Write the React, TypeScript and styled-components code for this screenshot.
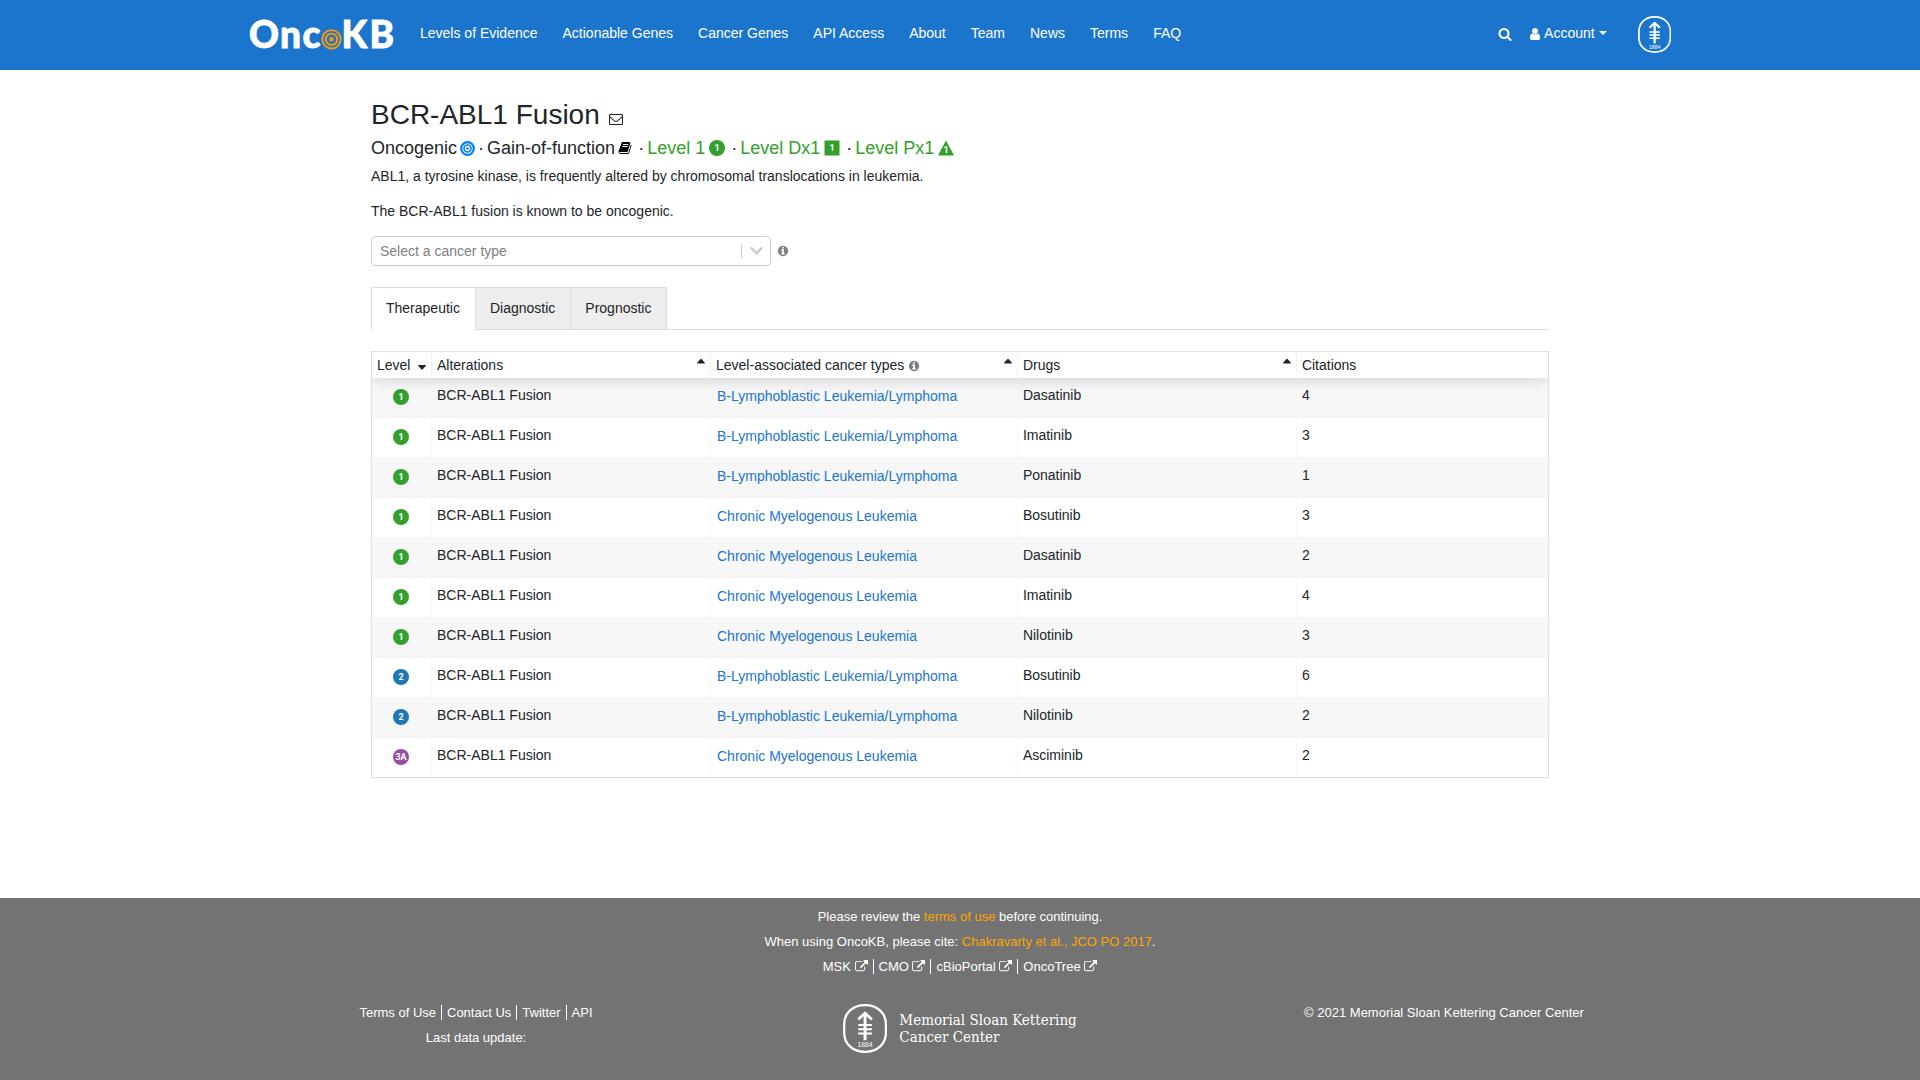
import React from 'react';
import styled, { createGlobalStyle } from 'styled-components';

const color = {
  brand: '#1c75cd',
  text: '#212529',
  orange: '#ffa500',
  footer: '#737373',
  line: '#dddddd',
  level1: '#33a02c',
  level2: '#1f78b4',
  level3: '#984ea3',
};

const GlobalStyle = createGlobalStyle`
  *, *::before, *::after { box-sizing: border-box; }
  body {
    margin: 0;
    background: #fff;
    color: ${color.text};
    font: 14px/21px "Liberation Sans", Arial, sans-serif;
  }
  h1, h2, p { margin: 0; font-weight: 400; }
  a { text-decoration: none; }
  button { font: inherit; color: inherit; background: none; border: 0; padding: 0; cursor: pointer; }
`;

/* ---------- icons ---------- */

const ICONS = {
  search: {
    box: '0 0 1792 1792',
    d: 'M1216 832q0-185-131.5-316.5t-316.5-131.5-316.5 131.5-131.5 316.5 131.5 316.5 316.5 131.5 316.5-131.5 131.5-316.5zm512 832q0 52-38 90t-90 38q-54 0-90-38l-343-342q-179 124-399 124-143 0-273.5-55.5t-225-150-150-225-55.5-273.5 55.5-273.5 150-225 225-150 273.5-55.5 273.5 55.5 225 150 150 225 55.5 273.5q0 220-124 399l343 343q37 37 37 90z',
  },
  user: {
    box: '256 0 1280 1792',
    d: 'M1536 1399q0 109-62.5 187t-150.5 78h-854q-88 0-150.5-78t-62.5-187q0-85 8.5-160.5t31.5-152 58.5-131 94-89 134.5-34.5q131 128 313 128t313-128q76 0 134.5 34.5t94 89 58.5 131 31.5 152 8.5 160.5zm-256-887q0 159-112.5 271.5t-271.5 112.5-271.5-112.5-112.5-271.5 112.5-271.5 271.5-112.5 271.5 112.5 112.5 271.5z',
  },
  info: {
    box: '0 0 1792 1792',
    d: 'M1152 1376v-160q0-14-9-23t-23-9h-96v-512q0-14-9-23t-23-9h-320q-14 0-23 9t-9 23v160q0 14 9 23t23 9h96v320h-96q-14 0-23 9t-9 23v160q0 14 9 23t23 9h448q14 0 23-9t9-23zm-128-896v-160q0-14-9-23t-23-9h-192q-14 0-23 9t-9 23v160q0 14 9 23t23 9h192q14 0 23-9t9-23zm640 416q0 209-103 385.5t-279.5 279.5-385.5 103-385.5-103-279.5-279.5-103-385.5 103-385.5 279.5-279.5 385.5-103 385.5 103 279.5 279.5 103 385.5z',
  },
  envelope: {
    box: '0 0 1792 1792',
    d: 'M1664 1504v-768q-32 36-69 66-268 206-426 338-51 43-83 67t-86.5 48.5-102.5 24.5h-2q-48 0-102.5-24.5t-86.5-48.5-83-67q-158-132-426-338-37-30-69-66v768q0 13 9.5 22.5t22.5 9.5h1472q13 0 22.5-9.5t9.5-22.5zm0-1051v-24.5l-.5-13-3-12.5-5.5-9-9-7.5-14-2.5h-1472q-13 0-22.5 9.5t-9.5 22.5q0 168 147 284 193 152 401 317 6 5 35 29.5t46 37.5 44.5 31.5 50.5 27.5 43 9h2q20 0 43-9t50.5-27.5 44.5-31.5 46-37.5 35-29.5q208-165 401-317 54-43 100.5-115.5t46.5-131.5zm128-37v1088q0 66-47 113t-113 47h-1472q-66 0-113-47t-47-113v-1088q0-66 47-113t113-47h1472q66 0 113 47t47 113z',
  },
  book: {
    box: '0 0 1792 1792',
    d: 'M1703 478q40 57 18 129l-275 906q-19 64-76.5 107.5t-122.5 43.5h-923q-77 0-148.5-53.5t-99.5-131.5q-24-67-2-127 0-4 3-27t4-37q1-8-3-21.5t-3-19.5q2-11 8-21t16.5-23.5 16.5-23.5q23-38 45-91.5t30-91.5q3-10 .5-30t-.5-28q3-11 17-28t17-23q21-36 42-92t25-90q1-9-2.5-32t.5-28q4-13 22-30.5t22-22.5q19-26 42.5-84.5t27.5-96.5q1-8-3-25.5t-2-26.5q2-8 9-18t18-23 17-21q8-12 16.5-30.5t15-35 16-36 19.5-32 26.5-23.5 36-11.5 47.5 5.5l-1 3q38-9 51-9h761q74 0 114 56t18 130l-274 906q-36 119-71.5 153.5t-128.5 34.5h-869q-27 0-38 15-11 16-1 43 24 70 144 70h923q29 0 56-15.5t35-41.5l300-987q7-22 5-57 38 15 59 43zm-1064 2q-4 13 2 22.5t20 9.5h608q13 0 25.5-9.5t16.5-22.5l21-64q4-13-2-22.5t-20-9.5h-608q-13 0-25.5 9.5t-16.5 22.5zm-83 256q-4 13 2 22.5t20 9.5h608q13 0 25.5-9.5t16.5-22.5l21-64q4-13-2-22.5t-20-9.5h-608q-13 0-25.5 9.5t-16.5 22.5z',
  },
  external: {
    box: '0 0 1792 1792',
    d: 'M1408 928v320q0 119-84.5 203.5t-203.5 84.5h-832q-119 0-203.5-84.5t-84.5-203.5v-832q0-119 84.5-203.5t203.5-84.5h704q14 0 23 9t9 23v64q0 14-9 23t-23 9h-704q-66 0-113 47t-47 113v832q0 66 47 113t113 47h832q66 0 113-47t47-113v-320q0-14 9-23t23-9h64q14 0 23 9t9 23zm384-864v512q0 26-19 45t-45 19-45-19l-176-176-652 652q-10 10-23 10t-23-10l-114-114q-10-10-10-23t10-23l652-652-176-176q-19-19-19-45t19-45 45-19h512q26 0 45 19t19 45z',
  },
};

function Icon({ name, size = 14, className }: { name: keyof typeof ICONS; size?: number; className?: string }) {
  return (
    <svg className={className} height={size} viewBox={ICONS[name].box} fill="currentColor" aria-hidden="true">
      <path d={ICONS[name].d} />
    </svg>
  );
}

const InfoIcon = styled(Icon).attrs({ name: 'info', size: 12 })`
  flex: none;
  color: #808080;
`;

const ExternalIcon = styled(Icon).attrs({ name: 'external', size: 13 })`
  vertical-align: -2px;
`;

function TargetIcon() {
  return (
    <svg width="15" height="15" viewBox="0 0 15 15" fill="none" stroke="#007fff" aria-hidden="true">
      <circle cx="7.5" cy="7.5" r="6.3" strokeWidth="2.2" />
      <circle cx="7.5" cy="7.5" r="3.5" strokeWidth="1.7" />
      <circle cx="7.5" cy="7.5" r="1.3" fill="#007fff" stroke="none" />
    </svg>
  );
}

type Shape = 'circle' | 'square' | 'triangle';

const LEVEL_COLORS: Record<string, string> = { '1': color.level1, '2': color.level2, '3A': color.level3 };

function LevelIcon({ level, shape = 'circle' }: { level: string; shape?: Shape }) {
  return (
    <svg width="16" height="16" viewBox="0 0 16 16" fill={LEVEL_COLORS[level]} role="img" aria-label={`Level ${level}`}>
      {shape === 'circle' && <circle cx="8" cy="8" r="8" />}
      {shape === 'square' && <rect x="0.5" y="0.5" width="15" height="15" />}
      {shape === 'triangle' && <path d="M8 .5 16 15.5H0z" />}
      <text
        x="8"
        y={shape === 'triangle' ? 13 : 11}
        fill="#fff"
        textAnchor="middle"
        fontFamily="Roboto, sans-serif"
        fontWeight="700"
        fontSize="9"
      >
        {level}
      </text>
    </svg>
  );
}

const LOGO_LETTERS: [string, number][] = [['O', -1], ['n', 30], ['c', 52.5], ['K', 91.5], ['B', 119.5]];

function OncoKbLogo() {
  return (
    <svg width="156" height="56" viewBox="-6 -12 156 56" role="img" aria-label="OncoKB">
      <g fill="#fff" stroke="#fff" strokeWidth="0.8" fontFamily="Lato, sans-serif" fontWeight="900" fontSize="37">
        {LOGO_LETTERS.map(([letter, x]) => <text key={letter} x={x} y="29">{letter}</text>)}
      </g>
      <g fill="none" stroke="#f90" strokeWidth="1.9">
        <circle cx="81.5" cy="20.3" r="9.2" />
        <circle cx="81.5" cy="20.3" r="5.7" />
        <circle cx="81.5" cy="20.3" r="2.3" fill="#f90" stroke="none" />
      </g>
    </svg>
  );
}

function MskSeal({ height }: { height: number }) {
  return (
    <svg height={height} viewBox="0 0 45 50" fill="none" stroke="#fff" aria-hidden="true">
      <path
        d="M22.5 1.2C35.5 1.2 43.8 9.5 43.8 21V29C43.8 40.5 35.5 48.8 22.5 48.8S1.2 40.5 1.2 29V21C1.2 9.5 9.5 1.2 22.5 1.2Z"
        strokeWidth="2.3"
      />
      <path d="M22.5 9.5V37" strokeWidth="3" />
      <path d="M15.5 15.8 22.5 9.3 29.5 15.8" strokeWidth="2.8" />
      <path d="M15.5 21.5H29.5M15.5 25.7H29.5M15.5 30H29.5" strokeWidth="2" />
      <text x="22.5" y="44" fill="#fff" stroke="none" textAnchor="middle" fontFamily="'Liberation Sans', Arial, sans-serif" fontSize="7">
        1884
      </text>
    </svg>
  );
}

function SortArrow({ down }: { down?: boolean }) {
  return (
    <svg width="8" height="16" viewBox="0 0 8 16" fill="currentColor" aria-hidden="true">
      <path d={down ? 'M.5 7h7q.7.3.2 1L4.5 11.5q-.5.4-1 0L.3 8q-.5-.7.2-1z' : 'M.5 5.5h7q.7-.3.2-1L4.5 1q-.5-.4-1 0L.3 4.5q-.5.7.2 1z'} />
    </svg>
  );
}

/* ---------- page frame ---------- */

const Page = styled.div`
  min-height: 100vh;
  display: flex;
  flex-direction: column;
`;

const Container = styled.div`
  width: 100%;
  max-width: 1452px;
  margin: 0 auto;
  padding: 0 16px;
`;

const Header = styled.header`
  background: ${color.brand};
  color: #fff;
`;

const NavBar = styled(Container)`
  display: flex;
  align-items: center;
  min-height: 70px;
  padding: 0 15px 0 10px;
`;

const Brand = styled.a`
  display: flex;
  margin-right: 20px;
`;

const NavLinks = styled.nav`
  display: flex;
  flex-wrap: wrap;
  gap: 0 25px;
  padding-bottom: 3px;
`;

const NavLink = styled.a`
  color: #fff;
`;

const NavTools = styled.div`
  display: flex;
  align-items: center;
  margin-left: auto;
  padding-bottom: 3px;
`;

const SearchButton = styled.button`
  display: flex;
  color: #fff;
  margin-right: 18px;
`;

const AccountButton = styled.button`
  display: flex;
  align-items: center;
  gap: 4px;
  color: #fff;

  &::after {
    content: '';
    border: 4px solid transparent;
    border-top-color: #fff;
    border-bottom: 0;
    margin-bottom: 2px;
  }
`;

const SealLink = styled.a`
  display: flex;
  margin-left: 31px;
  padding-bottom: 2px;
`;

/* ---------- main content ---------- */

const Main = styled.main`
  flex: 1;
  width: 100%;
  max-width: 1210px;
  margin: 0 auto;
  padding: 28px 16px 50px;
`;

const TitleRow = styled.div`
  display: flex;
  align-items: baseline;
  gap: 9px;
  margin-bottom: 5px;
`;

const Title = styled.h1`
  font-size: 28px;
  line-height: 34px;
`;

const MailLink = styled.a`
  color: ${color.text};

  svg { vertical-align: -2px; }
`;

const Summary = styled.div`
  display: flex;
  flex-wrap: wrap;
  align-items: center;
  margin-bottom: 7px;
  font-size: 18px;
  line-height: 22px;
`;

const SummaryItem = styled.span`
  display: inline-flex;
  align-items: center;
  gap: 3px;

  & + &::before {
    content: '·';
    margin-left: 3px;
  }
`;

const BookButton = styled.button`
  display: flex;
  color: #000;
  padding-right: 3px;
`;

const LevelLink = styled.a`
  display: inline-flex;
  align-items: center;
  gap: 4px;
  padding-right: 3px;
  color: ${color.level1};
`;

const Paragraph = styled.p`
  margin-bottom: 14px;
`;

const Filter = styled.div`
  display: flex;
  align-items: center;
  gap: 6px;
  margin-bottom: 21px;
`;

const SelectBox = styled.div`
  position: relative;
  width: 400px;
  max-width: 100%;
`;

const Select = styled.select`
  display: block;
  width: 100%;
  height: 30px;
  padding: 0 38px 0 8px;
  border: 1px solid #ccc;
  border-radius: 4px;
  background: #fff;
  color: #808080;
  font: inherit;
  appearance: none;
`;

const SelectArrow = styled.span`
  position: absolute;
  top: 8px;
  right: 8px;
  bottom: 8px;
  display: flex;
  align-items: center;
  padding-left: 8px;
  border-left: 1px solid #ccc;
  pointer-events: none;
`;

const Tabs = styled.div`
  display: flex;
  margin-bottom: 21px;
  border-bottom: 1px solid ${color.line};
`;

const Tab = styled.button<{ $active?: boolean }>`
  padding: 10px 15px 10px 14px;
  margin-bottom: -1px;
  border: 1px solid ${color.line};
  border-bottom-color: ${(p) => (p.$active ? '#fff' : color.line)};
  background: ${(p) => (p.$active ? '#fff' : '#ededed')};

  & + & { margin-left: -1px; }
`;

const Table = styled.table`
  display: block;
  border: 1px solid #e0e0e0;
  overflow: hidden;
`;

const Head = styled.thead`
  display: block;
  position: relative;
  box-shadow: 0 2px 15px 0 rgba(0, 0, 0, 0.15);
`;

const Body = styled.tbody`
  display: block;
`;

const Row = styled.tr`
  display: grid;
  grid-template-columns: 60px 200fr 220fr 200fr 180fr;

  ${Body} > & { min-height: 40px; }
  ${Body} > &:nth-child(odd) { background: #f7f7f7; }
  ${Body} > &:not(:last-child) { border-bottom: 1px solid #f2f2f2; }
  ${Body} > &:last-child { min-height: 39px; }
`;

const HeadCell = styled.th`
  display: flex;
  padding: 3px 5px 2px;
  font-weight: 400;
  text-align: left;

  &:not(:last-child) { border-right: 1px solid #f2f2f2; }
`;

const SortButton = styled.button`
  flex: 1;
  display: flex;
  align-items: center;
  justify-content: space-between;
`;

const HeadLabel = styled.span`
  display: flex;
  align-items: center;
  gap: 4px;
`;

const Cell = styled.td`
  padding: 7px 5px;

  &:not(:last-child) { border-right: 1px solid #f7f7f7; }
`;

const LevelCell = styled(Cell)`
  display: flex;
  justify-content: center;
  align-items: center;
  padding: 0 1px 1px 0;
`;

const CancerLink = styled.a`
  display: inline-block;
  padding: 1px;
  color: ${color.brand};
`;

/* ---------- footer ---------- */

const Footer = styled.footer`
  padding: 6px 0 27px;
  background: ${color.footer};
  color: #fff;
  font-size: 13px;
  line-height: 25px;
  text-align: center;
`;

const FooterColumns = styled(Container)`
  display: grid;
  grid-template-columns: repeat(3, 1fr);
  margin-top: 21px;
  padding: 0;
`;

const Highlight = styled.a`
  color: ${color.orange};
`;

const FooterLink = styled.a`
  color: #fff;

  & + & {
    margin-left: 5px;
    padding-left: 5px;
    border-left: 1px solid #fff;
  }
`;

const CenterLogo = styled.a`
  display: flex;
  align-items: center;
  justify-content: center;
  gap: 12px;
  padding-top: 4px;
  color: #fff;
`;

const CenterName = styled.span`
  font: 15px/17px "DejaVu Serif Condensed", "Liberation Serif", serif;
  text-align: left;
`;

/* ---------- data ---------- */

const NAV = ['Levels of Evidence', 'Actionable Genes', 'Cancer Genes', 'API Access', 'About', 'Team', 'News', 'Terms', 'FAQ'];

const BALL = 'B-Lymphoblastic Leukemia/Lymphoma';
const CML = 'Chronic Myelogenous Leukemia';

const ROWS: [string, string, string, number][] = [
  ['1', BALL, 'Dasatinib', 4],
  ['1', BALL, 'Imatinib', 3],
  ['1', BALL, 'Ponatinib', 1],
  ['1', CML, 'Bosutinib', 3],
  ['1', CML, 'Dasatinib', 2],
  ['1', CML, 'Imatinib', 4],
  ['1', CML, 'Nilotinib', 3],
  ['2', BALL, 'Bosutinib', 6],
  ['2', BALL, 'Nilotinib', 2],
  ['3A', CML, 'Asciminib', 2],
];

export default function App() {
  const [tab, setTab] = React.useState('Therapeutic');

  return (
    <Page>
      <GlobalStyle />
      <Header>
        <NavBar>
          <Brand href="#home"><OncoKbLogo /></Brand>
          <NavLinks>
            {NAV.map((item) => <NavLink key={item} href="#nav">{item}</NavLink>)}
          </NavLinks>
          <NavTools>
            <SearchButton type="button" aria-label="Search"><Icon name="search" /></SearchButton>
            <AccountButton type="button"><Icon name="user" />Account</AccountButton>
          </NavTools>
          <SealLink href="#msk" aria-label="Memorial Sloan Kettering"><MskSeal height={37} /></SealLink>
        </NavBar>
      </Header>

      <Main>
        <TitleRow>
          <Title>BCR-ABL1 Fusion</Title>
          <MailLink href="#feedback" aria-label="Send feedback"><Icon name="envelope" /></MailLink>
        </TitleRow>
        <Summary>
          <SummaryItem>Oncogenic<TargetIcon /></SummaryItem>
          <SummaryItem>
            Gain-of-function
            <BookButton type="button" aria-label="References"><Icon name="book" /></BookButton>
          </SummaryItem>
          <SummaryItem><LevelLink href="#tx">Level 1<LevelIcon level="1" /></LevelLink></SummaryItem>
          <SummaryItem><LevelLink href="#dx">Level Dx1<LevelIcon level="1" shape="square" /></LevelLink></SummaryItem>
          <SummaryItem><LevelLink href="#px">Level Px1<LevelIcon level="1" shape="triangle" /></LevelLink></SummaryItem>
        </Summary>
        <Paragraph>ABL1, a tyrosine kinase, is frequently altered by chromosomal translocations in leukemia.</Paragraph>
        <Paragraph>The BCR-ABL1 fusion is known to be oncogenic.</Paragraph>

        <Filter>
          <SelectBox>
            <Select aria-label="Cancer type" defaultValue="">
              <option value="">Select a cancer type</option>
              <option>{BALL}</option>
              <option>{CML}</option>
            </Select>
            <SelectArrow>
              <svg width="13" height="8" viewBox="0 0 13 8" fill="none" stroke="#ccc" strokeWidth="2.4" strokeLinecap="round" aria-hidden="true">
                <path d="M1.5 1.2 6.5 6.2 11.5 1.2" />
              </svg>
            </SelectArrow>
          </SelectBox>
          <InfoIcon />
        </Filter>

        <Tabs role="tablist">
          {['Therapeutic', 'Diagnostic', 'Prognostic'].map((name) => (
            <Tab key={name} type="button" role="tab" aria-selected={tab === name} $active={tab === name} onClick={() => setTab(name)}>
              {name}
            </Tab>
          ))}
        </Tabs>

        <Table>
          <Head>
            <Row>
              <HeadCell><SortButton type="button">Level<SortArrow down /></SortButton></HeadCell>
              <HeadCell><SortButton type="button">Alterations<SortArrow /></SortButton></HeadCell>
              <HeadCell>
                <SortButton type="button">
                  <HeadLabel>Level-associated cancer types<InfoIcon /></HeadLabel>
                  <SortArrow />
                </SortButton>
              </HeadCell>
              <HeadCell><SortButton type="button">Drugs<SortArrow /></SortButton></HeadCell>
              <HeadCell>Citations</HeadCell>
            </Row>
          </Head>
          <Body>
            {ROWS.map(([level, cancer, drug, citations], i) => (
              <Row key={i}>
                <LevelCell><LevelIcon level={level} /></LevelCell>
                <Cell>BCR-ABL1 Fusion</Cell>
                <Cell><CancerLink href="#cancer">{cancer}</CancerLink></Cell>
                <Cell>{drug}</Cell>
                <Cell>{citations}</Cell>
              </Row>
            ))}
          </Body>
        </Table>
      </Main>

      <Footer>
        <p>Please review the <Highlight href="#terms">terms of use</Highlight> before continuing.</p>
        <p>When using OncoKB, please cite: <Highlight href="#cite">Chakravarty et al., JCO PO 2017</Highlight>.</p>
        <p>
          {['MSK', 'CMO', 'cBioPortal', 'OncoTree'].map((site) => (
            <FooterLink key={site} href="#site">{site} <ExternalIcon /></FooterLink>
          ))}
        </p>
        <FooterColumns>
          <div>
            <p>
              {['Terms of Use', 'Contact Us', 'Twitter', 'API'].map((item) => (
                <FooterLink key={item} href="#link">{item}</FooterLink>
              ))}
            </p>
            <p>Last data update:</p>
          </div>
          <CenterLogo href="#msk">
            <MskSeal height={49} />
            <CenterName>Memorial Sloan Kettering<br />Cancer Center</CenterName>
          </CenterLogo>
          <div>© 2021 Memorial Sloan Kettering Cancer Center</div>
        </FooterColumns>
      </Footer>
    </Page>
  );
}
